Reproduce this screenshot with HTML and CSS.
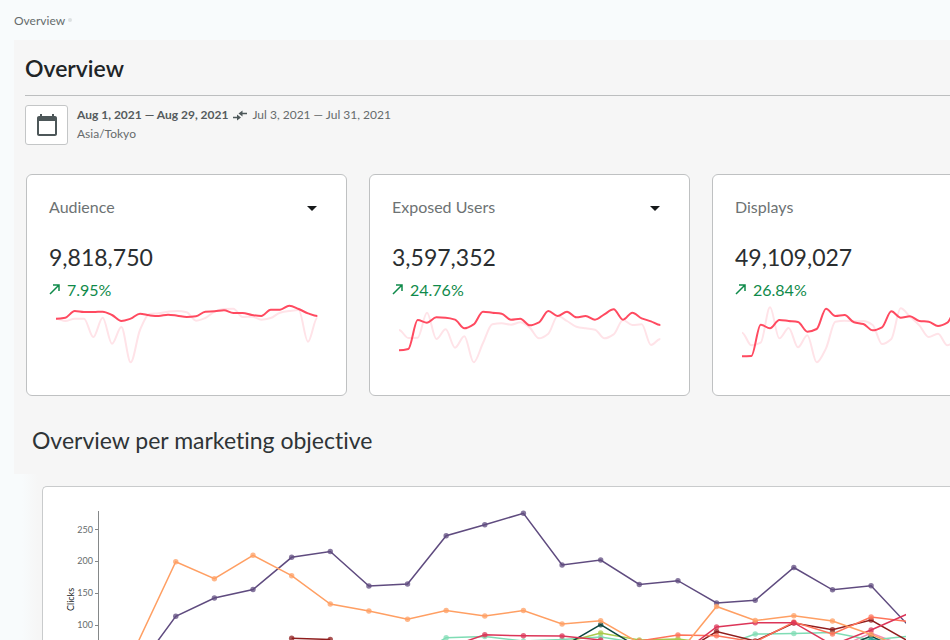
FILE: index.html
```html
<!DOCTYPE html>
<html lang="en">
<head>
    <meta charset="UTF-8">
    <meta name="viewport" content="width=device-width, initial-scale=1.0">
    <title>Overview</title>

    <link rel="stylesheet" href="styles.css">
    <script src="charts.js" defer></script>
</head>
<body>
    <nav class="breadcrumb">
        <a href="#">Overview</a>
        <span class="dot"></span>
    </nav>

    <main>
        <h1>Overview</h1>

        <div class="period">
            <button class="calendar" aria-label="Choose dates">
                <svg width="24" height="24" viewBox="0 0 24 24">
                    <path fill="#4d5759" d="M20 3h-1V1h-2v2H7V1H5v2H4c-1.1 0-2 .9-2 2v16c0 1.1.9 2 2 2h16c1.1 0 2-.9 2-2V5c0-1.1-.9-2-2-2zm0 18H4V8h16v13z"/>
                </svg>
            </button>
            <div class="dates">
                <p>
                    <strong>Aug 1, 2021 — Aug 29, 2021</strong>
                    <svg width="16" height="12" viewBox="0 0 16 12">
                        <path d="M1 8.500h5M9 4.500h6" stroke="#4d5759" stroke-width="1.5"/>
                        <path d="M5 5.500l4 3-4 3zM10.500 1.500l-4 3 4 3z" fill="#4d5759"/>
                    </svg>
                    <span>Jul 3, 2021 — Jul 31, 2021</span>
                </p>
                <p>Asia/Tokyo</p>
            </div>
        </div>

        <div class="cards">
            <article class="card">
                <header>
                    <h2>Audience</h2>
                    <button aria-label="Change metric"></button>
                </header>
                <p class="total">9,818,750</p>
                <p class="growth">
                    <svg width="12" height="12" viewBox="0 0 12 12"><path d="M1 11L10 2M4 2h6v6"/></svg>
                    7.95%
                </p>
                <svg class="spark" data-name="audience" viewBox="0 405 822 216"></svg>
            </article>

            <article class="card">
                <header>
                    <h2>Exposed Users</h2>
                    <button aria-label="Change metric"></button>
                </header>
                <p class="total">3,597,352</p>
                <p class="growth">
                    <svg width="12" height="12" viewBox="0 0 12 12"><path d="M1 11L10 2M4 2h6v6"/></svg>
                    24.76%
                </p>
                <svg class="spark" data-name="users" viewBox="0 405 822 216"></svg>
            </article>

            <article class="card">
                <header>
                    <h2>Displays</h2>
                    <button aria-label="Change metric"></button>
                </header>
                <p class="total">49,109,027</p>
                <p class="growth">
                    <svg width="12" height="12" viewBox="0 0 12 12"><path d="M1 11L10 2M4 2h6v6"/></svg>
                    26.84%
                </p>
                <svg class="spark" data-name="displays" viewBox="0 405 822 216"></svg>
            </article>
        </div>

        <h2 class="section-title">Overview per marketing objective</h2>

        <section class="objective">
            <div class="panel">
                <svg class="chart" width="863" height="153" viewBox="43 487 863 153">
                    <path class="axis" d="M98.5 511V640M95 529.5h3M95 561.5h3M95 593.5h3M95 625.5h3"/>
                    <g class="ticks">
                        <text x="93" y="533">250</text>
                        <text x="93" y="564">200</text>
                        <text x="93" y="596">150</text>
                        <text x="93" y="628">100</text>
                    </g>
                    <text class="label" transform="translate(74 611) rotate(-90)">Clicks</text>
                    <g id="series"></g>
                </svg>
            </div>
        </section>
    </main>
</body>
</html>
```
FILE: styles.css
```css
* {
    box-sizing: border-box;
}

body {
    margin: 0;
    overflow-x: hidden;
    font-family: Lato, 'Open Sans', sans-serif;
    font-variant-ligatures: none;
    background: #f8fbfc;
    color: #666b6c;
}

h1, h2, p {
    margin: 0;
}

button {
    padding: 0;
    border: 0;
    background: none;
    cursor: pointer;
}

.breadcrumb {
    display: flex;
    align-items: center;
    gap: 3px;
    height: 40px;
    padding-left: 14px;
    font-size: 12px;

    a {
        color: inherit;
        text-decoration: none;
    }

    .dot {
        width: 4px;
        height: 4px;
        border-radius: 50%;
        background: #dde1e2;
    }
}

main {
    margin-left: 14px;
    background: #f6f6f6;
}

h1 {
    height: 56px;
    margin-left: 11px;
    border-bottom: 1px solid #bcbebf;
    font-size: 23px;
    font-weight: 600;
    line-height: 56px;
    color: #202426;
}

.period {
    display: flex;
    gap: 9px;
    margin: 9px 0 0 11px;
}

.calendar {
    display: flex;
    align-items: center;
    justify-content: center;
    width: 43px;
    height: 40px;
    border: 1px solid #c4c6c7;
    border-radius: 3px;
    background: #fff;
}

.dates {
    font-size: 12px;
    line-height: 19px;

    p {
        display: flex;
        align-items: center;
        gap: 4px;
    }

    strong {
        color: #555b5d;
    }
}

.cards {
    display: flex;
    gap: 22px;
    margin: 29px 0 0 12px;
    overflow: hidden;
}

.card {
    flex: 0 0 auto;
    width: 321px;
    height: 222px;
    padding: 19px 24px 0 22px;
    border: 1px solid #bfc1c2;
    border-radius: 6px;
    background: #fff;

    header {
        display: flex;
        align-items: center;
        justify-content: space-between;
        height: 24px;
    }

    h2 {
        font-size: 16px;
        font-weight: 400;
        color: #6d7273;
    }

    button {
        width: 20px;
        height: 20px;

        &::after {
            content: '';
            display: block;
            margin: 4px auto 0;
            width: 0;
            border: 5px solid transparent;
            border-top-color: #16191a;
            border-bottom: 0;
        }
    }
}

.total {
    margin-top: 23px;
    font-size: 23px;
    line-height: 32px;
    color: #2a2e30;
}

.growth {
    display: flex;
    align-items: center;
    gap: 6px;
    height: 24px;
    margin-top: 4px;
    font-size: 16px;
    color: #0f8a4a;

    path {
        fill: none;
        stroke: #0f8a4a;
        stroke-width: 1.5;
    }
}

.spark {
    display: block;
    width: 274px;
    height: 72px;
    margin-top: -1px;

    path {
        fill: none;
        stroke: #ff4a60;
        stroke-width: 6;
    }

    .previous {
        stroke: #ffe3e8;
    }
}

.section-title {
    padding-left: 18px;
    font-size: 23px;
    font-weight: 400;
    line-height: 32px;
    margin-top: 28px;
    color: #2f3436;
}

.objective {
    margin-top: 18px;
    padding: 12px 0 0 28px;
    background: linear-gradient(to right, #f8fbfc 8px, #f6f6f6 24px);
}

.panel {
    border: 1px solid #c9cbcc;
    border-right: 0;
    border-bottom: 0;
    border-radius: 5px 0 0 0;
    background: #fff;
}

.chart {
    display: block;

    .axis {
        fill: none;
        stroke: #858889;
    }

    .ticks {
        font-size: 9px;
        text-anchor: end;
        fill: #666b6c;
    }

    .label {
        font-size: 9px;
        fill: #202426;
    }

    polyline {
        fill: none;
        stroke-width: 1.5;
    }

    circle {
        opacity: .75;
    }
}
```
FILE: charts.js
```js
const sparks = {
    audience: {
        previous: [461, 468, 461, 461, 516, 458, 536, 486, 592, 495, 447, 445, 440, 438, 442, 467, 459, 440, 432, 431, 456, 455, 464, 459, 443, 438, 435, 530, 458],
        current: [461, 458, 438, 441, 441, 440, 450, 468, 461, 446, 451, 453, 449, 452, 456, 454, 440, 439, 436, 444, 444, 450, 453, 434, 434, 422, 432, 445, 453]
    },
    users: {
        previous: [495, 519, 518, 443, 522, 493, 548, 514, 592, 534, 478, 475, 479, 472, 488, 520, 506, 453, 468, 485, 490, 494, 520, 508, 465, 480, 478, 540, 522],
        current: [556, 552, 465, 473, 457, 458, 464, 490, 478, 440, 443, 446, 464, 461, 481, 472, 438, 453, 440, 457, 453, 464, 448, 433, 464, 443, 460, 469, 480]
    },
    displays: {
        previous: [503, 541, 533, 427, 520, 489, 547, 511, 592, 550, 470, 467, 469, 468, 480, 537, 522, 430, 455, 481, 516, 506, 541, 520, 470, 480, 478, 530, 510],
        current: [574, 573, 479, 490, 465, 468, 471, 500, 492, 431, 453, 450, 472, 477, 496, 487, 439, 458, 454, 468, 470, 483, 473, 430, 445, 440, 460, 469, 480]
    }
}

// start is the index of the first day of each line
const series = [
    { color: '#f48fb1', start: 19, points: [650, 633, 648] },
    { color: '#5f4b7f', start: 1, points: [669, 616.3, 598, 589.5, 557.3, 551.5, 586, 584, 535.7, 524.7, 513.3, 565, 560, 584.5, 580.7, 603, 600.3, 567.5, 589.8, 585.8, 627] },
    { color: '#7fdcb4', start: 8, points: [660, 637.7, 636.5, 641, 639.5, 637, 643, 650, 648, 634, 633.5, 632.5, 640, 636] },
    { color: '#a9c94b', start: 12, points: [643, 633, 640, 639, 644] },
    { color: '#0d4540', start: 12, points: [647, 624.7, 648] },
    { color: '#0d4540', start: 19, points: [652, 636, 655] },
    { color: '#8f1d1d', start: 5, points: [638.3, 639.5] },
    { color: '#8f1d1d', start: 15, points: [655, 631.5, 641, 623, 629.8, 620, 642] },
    { color: '#ff7359', start: 14, points: [641, 635, 635.7, 642, 622, 634, 617, 621.7] },
    { color: '#dc3558', start: 9, points: [648, 634.8, 635.8, 636, 640, 652, 656, 627, 622.7, 622.7, 645, 630, 613] },
    { color: '#ff9f63', start: 1, points: [644, 561.7, 578.7, 555.3, 575.7, 604, 611, 619.3, 610.5, 616, 610.5, 624, 620.8, 643, 654, 606.5, 620.5, 615.7, 621, 634.5, 650] },
    { color: '#2aa79b', start: 20, points: [639.5, 645] }
]

// slope is 0 on peaks so the curve never goes over the data
function smoothPath(values) {
    const step = 28
    const slope = i => {
        const a = values[i] - values[i - 1]
        const b = values[i + 1] - values[i]
        if (!(a * b > 0)) return 0
        return 2 * a * b / (a + b)
    }

    let d = `M21 ${values[0]}`
    for (let i = 1; i < values.length; i++) {
        const x = 21 + i * step
        const y1 = values[i - 1] + slope(i - 1) / 3
        const y2 = values[i] - slope(i) / 3
        d += `C${x - step * 2 / 3} ${y1} ${x - step / 3} ${y2} ${x} ${values[i]}`
    }
    return d
}

document.querySelectorAll('.spark').forEach(el => {
    const { previous, current } = sparks[el.dataset.name]
    el.innerHTML = `
        <path class="previous" d="${smoothPath(previous)}"/>
        <path d="${smoothPath(current)}"/>
    `
})

document.querySelector('#series').innerHTML = series.map(({ color, start, points }) => {
    const coords = points.map((y, i) => [98.5 + (start + i) * 38.63, y])
    const circles = coords.map(([x, y]) => `<circle cx="${x}" cy="${y}" r="2.7" fill="${color}"/>`)
    return `<polyline points="${coords.join(' ')}" stroke="${color}"/>${circles.join('')}`
}).join('')
```
